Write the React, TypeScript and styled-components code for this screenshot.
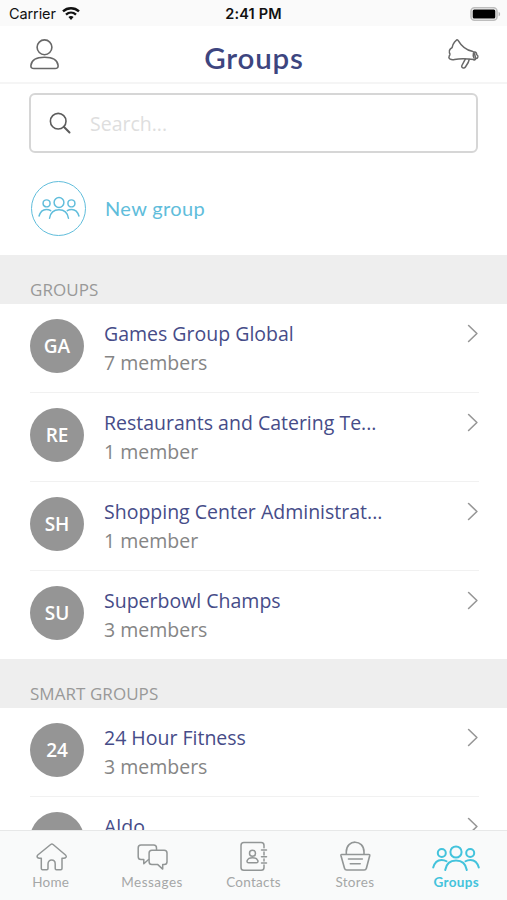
import React from "react";
import styled, { createGlobalStyle, css } from "styled-components";

const GlobalStyle = createGlobalStyle`
  *, *::before, *::after { box-sizing: border-box; }
  html, body { margin: 0; padding: 0; background: #fff; }
  body { overflow: hidden; }
  svg { display: block; flex: none; fill: none; stroke: currentColor; stroke-linecap: round; stroke-linejoin: round; }
`;

const Screen = styled.div`
  width: 507px;
  height: 900px;
  display: flex;
  flex-direction: column;
  overflow: hidden;
  background: #fff;
  font-family: "Open Sans", "Noto Sans", sans-serif;
`;

const StatusBar = styled.div`
  height: 26px;
  flex: none;
  display: grid;
  grid-template-columns: 1fr auto 1fr;
  align-items: center;
  padding: 2px 6px 0 9px;
  background: #fafafa;
  color: #111;
  font: 400 14.5px/20px Inter, sans-serif;
`;

const Carrier = styled.div`
  display: flex;
  align-items: center;
  gap: 6px;
  letter-spacing: -0.1px;
`;

const Clock = styled.div`
  font-weight: 600;
  font-size: 14.5px;
  letter-spacing: 0.15px;
  margin-right: 3px;
`;

const BatterySlot = styled.div`
  display: flex;
  justify-content: flex-end;
`;

const Header = styled.header`
  height: 58px;
  flex: none;
  display: grid;
  grid-template-columns: 1fr auto 1fr;
  align-items: start;
  padding: 12px 28px 0 29px;
  border-bottom: 2px solid #f5f5f5;
  color: #686868;
`;

const Title = styled.h1`
  margin: 2px 0 0;
  color: #3d457f;
  font: 600 29.5px/36px Lato, sans-serif;
  letter-spacing: 0.8px;
`;

const HeaderAction = styled.div`
  display: flex;
  justify-content: flex-end;
`;

const SearchBox = styled.div`
  flex: none;
  height: 60px;
  margin: 9px 29px 0;
  padding: 0 17.5px;
  display: flex;
  align-items: center;
  gap: 19.5px;
  border: 2px solid #d6d6d6;
  border-radius: 6px;
  color: #5c5c5c;
`;

const Placeholder = styled.span`
  color: #dedede;
  font-size: 19.5px;
  line-height: 28px;
  padding-top: 2px;
`;

const NewGroup = styled.div`
  flex: none;
  height: 102px;
  padding: 28px 31px 0;
  display: flex;
  align-items: flex-start;
  gap: 19px;
  color: #60bddb;
`;

const NewGroupIcon = styled.div`
  width: 55px;
  height: 55px;
  display: flex;
  align-items: center;
  justify-content: center;
  padding-bottom: 6px;
  border: 1.5px solid #60bddb;
  border-radius: 50%;
`;

const NewGroupLabel = styled.span`
  font: 400 20px/55px Lato, sans-serif;
  letter-spacing: 0.36px;
`;

const List = styled.main`
  flex: 1;
  min-height: 0;
  overflow: hidden;
`;

const SectionTitle = styled.h2`
  height: 49px;
  margin: 0;
  padding: 22.5px 30px 0;
  background: #eee;
  color: #999;
  font-weight: 400;
  font-size: 17px;
  line-height: 24px;
  letter-spacing: 0.05px;
`;

const Row = styled.div<{ $last?: boolean }>`
  height: ${(p) => (p.$last ? 88 : 89.1)}px;
  margin: 0 28px 0 30px;
  padding-top: 14.5px;
  display: flex;
  align-items: flex-start;
  ${(p) => !p.$last && css`border-bottom: 1px solid #f1f1f1;`}
`;

const Avatar = styled.div`
  width: 54px;
  height: 54px;
  margin-right: 20px;
  flex: none;
  border-radius: 50%;
  background: #959595;
  color: #fff;
  text-align: center;
  font-weight: 600;
  font-size: 19px;
  line-height: 55px;
`;

const RowText = styled.div`
  flex: 1;
  min-width: 0;
  white-space: nowrap;
  font-size: 19.5px;
  line-height: 29.5px;
`;

const Name = styled.div`
  color: #464c88;
`;

const Members = styled.div`
  color: #858585;
`;

const ChevronIcon = styled.svg`
  margin-top: 5px;
  color: #969696;
`;

const TabBar = styled.nav`
  height: 70px;
  flex: none;
  display: grid;
  grid-template-columns: repeat(5, 1fr);
  border-top: 1px solid #e7e8e8;
  background: #f9fafa;
`;

const Tab = styled.div<{ $active?: boolean }>`
  display: flex;
  flex-direction: column;
  align-items: center;
  padding-top: 8px;
  color: ${(p) => (p.$active ? "#43c3dc" : "#929696")};
`;

const TabLabel = styled.span<{ $active?: boolean; $tracking: number }>`
  font: ${(p) => (p.$active ? 700 : 400)} 13.5px/18px Lato, sans-serif;
  margin-top: -0.5px;
  letter-spacing: ${(p) => p.$tracking}px;
  color: ${(p) => (p.$active ? "#43c3dc" : "#a5a7a7")};
`;

const PeopleIcon = ({ width, height, weight }: { width: number; height: number; weight: number }) => (
  <svg width={width} height={height} viewBox="0 0 48 34" strokeWidth={weight}>
    <circle cx="24" cy="13" r="5.6" />
    <circle cx="9.8" cy="14" r="4" />
    <circle cx="38.2" cy="14" r="4" />
    <path d="M13.2 31C14.5 23.2 18.8 21.4 24 21.4S33.5 23.2 34.8 31" />
    <path d="M1.2 28.5C2.7 23 5.8 20.9 9.5 20.9q3 0 5 1.4M46.8 28.5C45.3 23 42.2 20.9 38.5 20.9q-3 0-5 1.4" />
  </svg>
);

const HomeIcon = () => (
  <svg width="34" height="34" viewBox="0 0 34 34" strokeWidth="1.5">
    <path d="M16.7 5.500q1.200-.8 2.400 0L31.500 16q1.300 1.200.5 2.300-.8 1-2.400 1H28v10.200q0 1.200-1.200 1.200h-4.400q-1.200 0-1.200-1.200V25c0-5.200-7.200-5.200-7.200 0v4.500q0 1.200-1.200 1.200H8.500q-1.200 0-1.200-1.200V19.300H5.500q-1.500 0-2.200-1-.7-1.200.5-2.300Z" />
  </svg>
);

const MessagesIcon = () => (
  <svg width="34" height="34" viewBox="0 0 34 34" strokeWidth="1.5">
    <path d="M13.6 20.5 8.8 24.7V20.5H6q-2.8 0-2.8-2.8V8.9Q3.2 6.1 6 6.1h12.7q2.8 0 2.8 2.8v2.3" />
    <path d="M16.9 11.2h12.3q2.8 0 2.8 2.8v8.8q0 2.8-2.8 2.8h-1.5v4.5L22.8 25.6h-5.9q-2.8 0-2.8-2.8V14q0-2.8 2.8-2.8Z" />
  </svg>
);

const ContactsIcon = () => (
  <svg width="34" height="34" viewBox="0 0 34 34" strokeWidth="1.5">
    <path d="M28 8.7V6.4q0-2.8-2.8-2.8H7.8Q5 3.6 5 6.4v22q0 2.8 2.8 2.8h17.4q2.8 0 2.8-2.8v-2.3M28 13v3M28 20v2M25.5 11h5M25.5 17.8h5M25.5 24h5" />
    <circle cx="16.5" cy="14.3" r="3" />
    <path d="M12.7 23.7q-2.2 0-1.5-2.2c1.4-3.8 9.2-3.8 10.6 0q.7 2.2-1.5 2.2Z" />
  </svg>
);

const StoresIcon = () => (
  <svg width="34" height="34" viewBox="0 0 34 34" strokeWidth="1.6">
    <path d="M3.6 15.5h27.2q1.2 0 .9 1.3l-3.3 12.4q-.5 1.8-2.2 1.8H8.7q-1.7 0-2.2-1.8L3 16.8q-.3-1.3.6-1.3ZM8.3 15.5V13C8.3-.3 26 .1 26 13v2.5M10.5 20h13.8M12.3 24.7h9.9" />
  </svg>
);

const UserIcon = () => (
  <svg width="31" height="34" viewBox="0 0 31 34" strokeWidth="1.6">
    <circle cx="15.5" cy="9.3" r="7.4" />
    <path d="M5 30.5q-3.4 0-3.1-3C2.5 22 8 19.3 15.5 19.3S28.5 22 29.1 27.5q.3 3-3.1 3Z" />
  </svg>
);

const MegaphoneIcon = () => (
  <svg width="32" height="34" viewBox="0 0 32 34" strokeWidth="1.5">
    <path d="M9.600 1.900c.8-.4 1.500.3 2 1.200 3 5.200 7.600 8.800 13.600 10.200q1.800.4 2.200 2.200l1.100 4q.4 2.200-1.600 2C20.500 20.600 14 20 7.500 21.500Q5 22.200 2.800 20.900q-1.500-1-.7-2.500l.8-1.700q.2-1-.5-2-.7-2.200 1-3.800l1.700-1.200q.4-3.200 2.500-5.700Z" />
    <path d="M27.500 13.900q2.200.3 2.100 2.700 1.500.7 1.300 2.300-.3 1.700-2 1.600-.5 1.500-2 1.400M26.400 15.500q-.6 2 .6 4.500" />
    <path d="m18.300 21.200-3.400 6.300c-1 2.300 2.200 3.500 3.500 1.500l2.800-4.500 1-3" />
  </svg>
);

const SearchIcon = () => (
  <svg width="22" height="22" viewBox="0 0 22 22" strokeWidth="1.6">
    <circle cx="9.2" cy="9.2" r="7.8" />
    <path d="m14.8 14.8 5.7 5.7" strokeWidth="2" />
  </svg>
);

const WifiIcon = () => (
  <svg width="18" height="14" viewBox="0 0 18 14" strokeWidth="2.4">
    <path d="M1 4.300c4.600-4.100 11.400-4.100 16 0M4 7.600c3-2.700 7-2.700 10 0" strokeLinecap="butt" />
    <path d="m6.400 10.100 2.600 3 2.600-3c-1.500-1.400-3.700-1.400-5.200 0Z" fill="currentColor" stroke="none" />
  </svg>
);

const BatteryIcon = () => (
  <svg width="31" height="14" viewBox="0 0 31 14">
    <rect x="1" y=".8" width="26" height="12.4" rx="3.5" stroke="#bdbdbd" strokeWidth="1.6" />
    <rect x="2.7" y="2.5" width="22.6" height="9" rx="1.5" fill="#000" stroke="none" />
    <path d="M28.600 4.700c2 .8 2 3.800 0 4.600Z" fill="#b5b5b5" stroke="none" />
  </svg>
);

type Group = { initials: string; name: string; members?: string };

const groups: Group[] = [
  { initials: "GA", name: "Games Group Global", members: "7 members" },
  { initials: "RE", name: "Restaurants and Catering Te...", members: "1 member" },
  { initials: "SH", name: "Shopping Center Administrat...", members: "1 member" },
  { initials: "SU", name: "Superbowl Champs", members: "3 members" },
];

const smartGroups: Group[] = [
  { initials: "24", name: "24 Hour Fitness", members: "3 members" },
  { initials: "", name: "Aldo" },
];

const GroupRow = ({ group, last }: { group: Group; last?: boolean }) => (
  <Row $last={last}>
    <Avatar>{group.initials}</Avatar>
    <RowText>
      <Name>{group.name}</Name>
      {group.members && <Members>{group.members}</Members>}
    </RowText>
    <ChevronIcon width="12" height="19" viewBox="0 0 12 19" strokeWidth="1.6">
      <path d="m1.600 1.500 8.300 8-8.300 8" />
    </ChevronIcon>
  </Row>
);

const tabs = [
  { label: "Home", icon: <HomeIcon />, tracking: 0.2 },
  { label: "Messages", icon: <MessagesIcon />, tracking: 0.5 },
  { label: "Contacts", icon: <ContactsIcon />, tracking: 0.25 },
  { label: "Stores", icon: <StoresIcon />, tracking: 0.3 },
  { label: "Groups", icon: <PeopleIcon width={48} height={34} weight={2} />, active: true, tracking: 0.35 },
];

export default function App() {
  return (
    <>
      <GlobalStyle />
      <Screen>
        <StatusBar>
          <Carrier>Carrier<WifiIcon /></Carrier>
          <Clock>2:41 PM</Clock>
          <BatterySlot><BatteryIcon /></BatterySlot>
        </StatusBar>
        <Header>
          <UserIcon />
          <Title>Groups</Title>
          <HeaderAction><MegaphoneIcon /></HeaderAction>
        </Header>
        <SearchBox>
          <SearchIcon />
          <Placeholder>Search...</Placeholder>
        </SearchBox>
        <NewGroup>
          <NewGroupIcon><PeopleIcon width={42} height={30} weight={1.7} /></NewGroupIcon>
          <NewGroupLabel>New group</NewGroupLabel>
        </NewGroup>
        <List>
          <SectionTitle>GROUPS</SectionTitle>
          {groups.map((g, i) => <GroupRow key={g.name} group={g} last={i === groups.length - 1} />)}
          <SectionTitle>SMART GROUPS</SectionTitle>
          {smartGroups.map((g) => <GroupRow key={g.name} group={g} />)}
        </List>
        <TabBar>
          {tabs.map((t) => (
            <Tab key={t.label} $active={t.active}>
              {t.icon}
              <TabLabel $active={t.active} $tracking={t.tracking}>{t.label}</TabLabel>
            </Tab>
          ))}
        </TabBar>
      </Screen>
    </>
  );
}
